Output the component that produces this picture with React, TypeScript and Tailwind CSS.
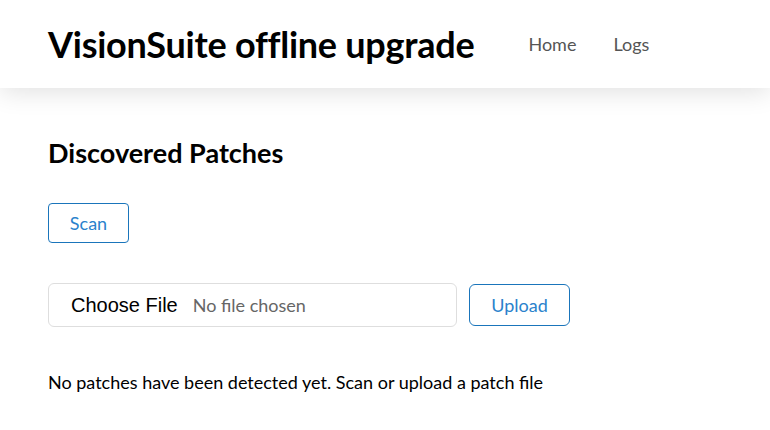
export default function App() {
  return (
    <div className="min-h-[430px] bg-white text-black" style={{ fontFamily: 'Lato, "Noto Sans", sans-serif' }}>
      <header className="flex h-[88px] items-center bg-white px-12 shadow-[0_4px_24px_rgba(0,0,0,0.12)]">
        <h1 className="text-[36px] font-bold tracking-[-0.25px] leading-none">VisionSuite offline upgrade</h1>
        <nav className="ml-[54px] flex gap-[37px] text-[18px] text-[#555]">
          <a>Home</a>
          <a>Logs</a>
        </nav>
      </header>
      <main className="px-12 pt-[51px]">
        <h2 className="text-[27px] font-bold leading-none">Discovered Patches</h2>
        <button className="mt-[37px] h-10 w-[81px] rounded border border-[#1a75bb] text-[18px] text-[#2a82cc]">Scan</button>
        <div className="mt-10 flex items-center gap-3">
          <div className="flex h-[44px] w-[409px] items-center rounded-md border border-[#dedede] pl-[22px]">
            <span className="text-[20px]" style={{ fontFamily: '"Liberation Sans", Arial, sans-serif' }}>Choose File</span>
            <span className="ml-[15px] text-[18px] text-[#666]">No file chosen</span>
          </div>
          <button className="h-[42px] w-[101px] rounded-md border border-[#1a75bb] text-[18px] text-[#2a82cc]">Upload</button>
        </div>
        <p className="mt-[42px] text-[18px]">No patches have been detected yet. Scan or upload a patch file</p>
      </main>
    </div>
  );
}
